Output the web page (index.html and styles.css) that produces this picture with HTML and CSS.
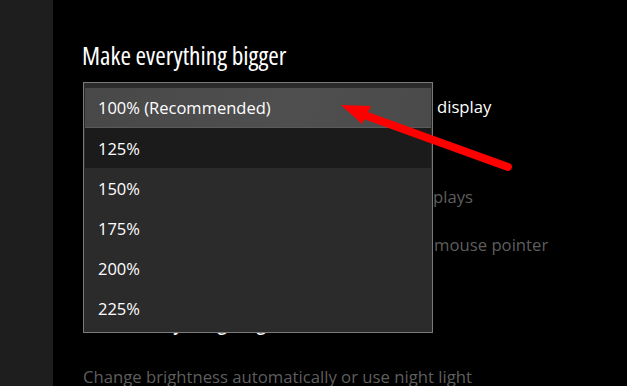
FILE: index.html
```html
<!DOCTYPE html>
<html lang="en">
<head>
<meta charset="utf-8">
<title>Ease of Access - Display</title>
<link rel="stylesheet" href="styles.css">
</head>
<body>
<div class="app">
  <aside class="sidebar"></aside>
  <main class="main">
    <h2 class="heading">Make everything bigger</h2>
    <div class="row label r-display"><span class="covered">Change the size of apps and text on the main</span><span class="tail t-display">display</span></div>
    <div class="row link r-plays"><span class="covered">Change the size of apps and text on other dis</span><span class="tail t-plays">plays</span></div>
    <div class="row link r-mouse"><span class="covered">Change the size and color of your</span><span class="tail t-mouse">mouse pointer</span></div>
    <h2 class="heading heading2">Make everything brighter</h2>
    <div class="row link r-bright">Change brightness automatically or use night light</div>

    <ul class="dropdown">
      <li class="opt selected">100% (Recommended)</li>
      <li class="opt hover">125%</li>
      <li class="opt">150%</li>
      <li class="opt">175%</li>
      <li class="opt">200%</li>
      <li class="opt">225%</li>
    </ul>
  </main>
</div>
<svg class="arrow" width="627" height="386" viewBox="0 0 627 386">
  <line x1="356" y1="112" x2="508" y2="167" stroke="#ff0000" stroke-width="8" stroke-linecap="round"/>
  <polygon points="341,105 371,106 362,124" fill="#ff0000"/>
</svg>
</body>
</html>
```
FILE: styles.css
```css
html, body {
  margin: 0;
  padding: 0;
  background: #000;
}
body {
  width: 627px;
  height: 386px;
  overflow: hidden;
  position: relative;
  font-family: "Open Sans", "Noto Sans", sans-serif;
  font-stretch: 93%;
  color: #fff;
}
.app {
  display: flex;
  height: 386px;
}
.sidebar {
  width: 53px;
  flex: none;
  background: #1e1e1e;
}
.main {
  flex: 1;
  position: relative;
  padding: 39px 0 0 30px;
}
.heading {
  margin: 0 0 0 -1px;
  font-size: 25.4px;
  line-height: 32px;
  font-weight: 400;
  font-stretch: 80%;
  color: #fff;
  white-space: nowrap;
}
.heading2 {
  margin-top: 46px;
}
.row {
  font-size: 16.7px;
  line-height: 24px;
  white-space: nowrap;
  display: flex;
}
.label { color: #fff; }
.link { color: #5e5e5e; }
.covered {
  display: inline-block;
  width: 340px;
  overflow: hidden;
}
.t-display { margin-left: 14px; }
.t-plays { margin-left: 10px; }
.t-mouse { margin-left: 11px; }
.r-display { margin-top: 24px; }
.r-plays { margin-top: 66px; }
.r-mouse { margin-top: 24px; }
.r-bright { margin-top: 30px; }

.dropdown {
  position: absolute;
  left: 30px;
  top: 82px;
  width: 348px;
  margin: 0;
  padding: 5px 0 4px;
  list-style: none;
  background: #2b2b2b;
  border: 1px solid #7a7a7a;
}
.opt {
  height: 40px;
  margin: 0 1px;
  padding-left: 13px;
  display: flex;
  align-items: center;
  font-size: 16.5px;
  color: #fff;
}
.selected {
  background: linear-gradient(100deg, #484848 0%, #4f4f4f 60%, #4a4a4a 100%);
  border-bottom: 1px solid #5a5a5a;
  height: 39px;
}
.hover {
  background: #1b1b1b;
}
.arrow {
  position: absolute;
  left: 0;
  top: 0;
}
```
